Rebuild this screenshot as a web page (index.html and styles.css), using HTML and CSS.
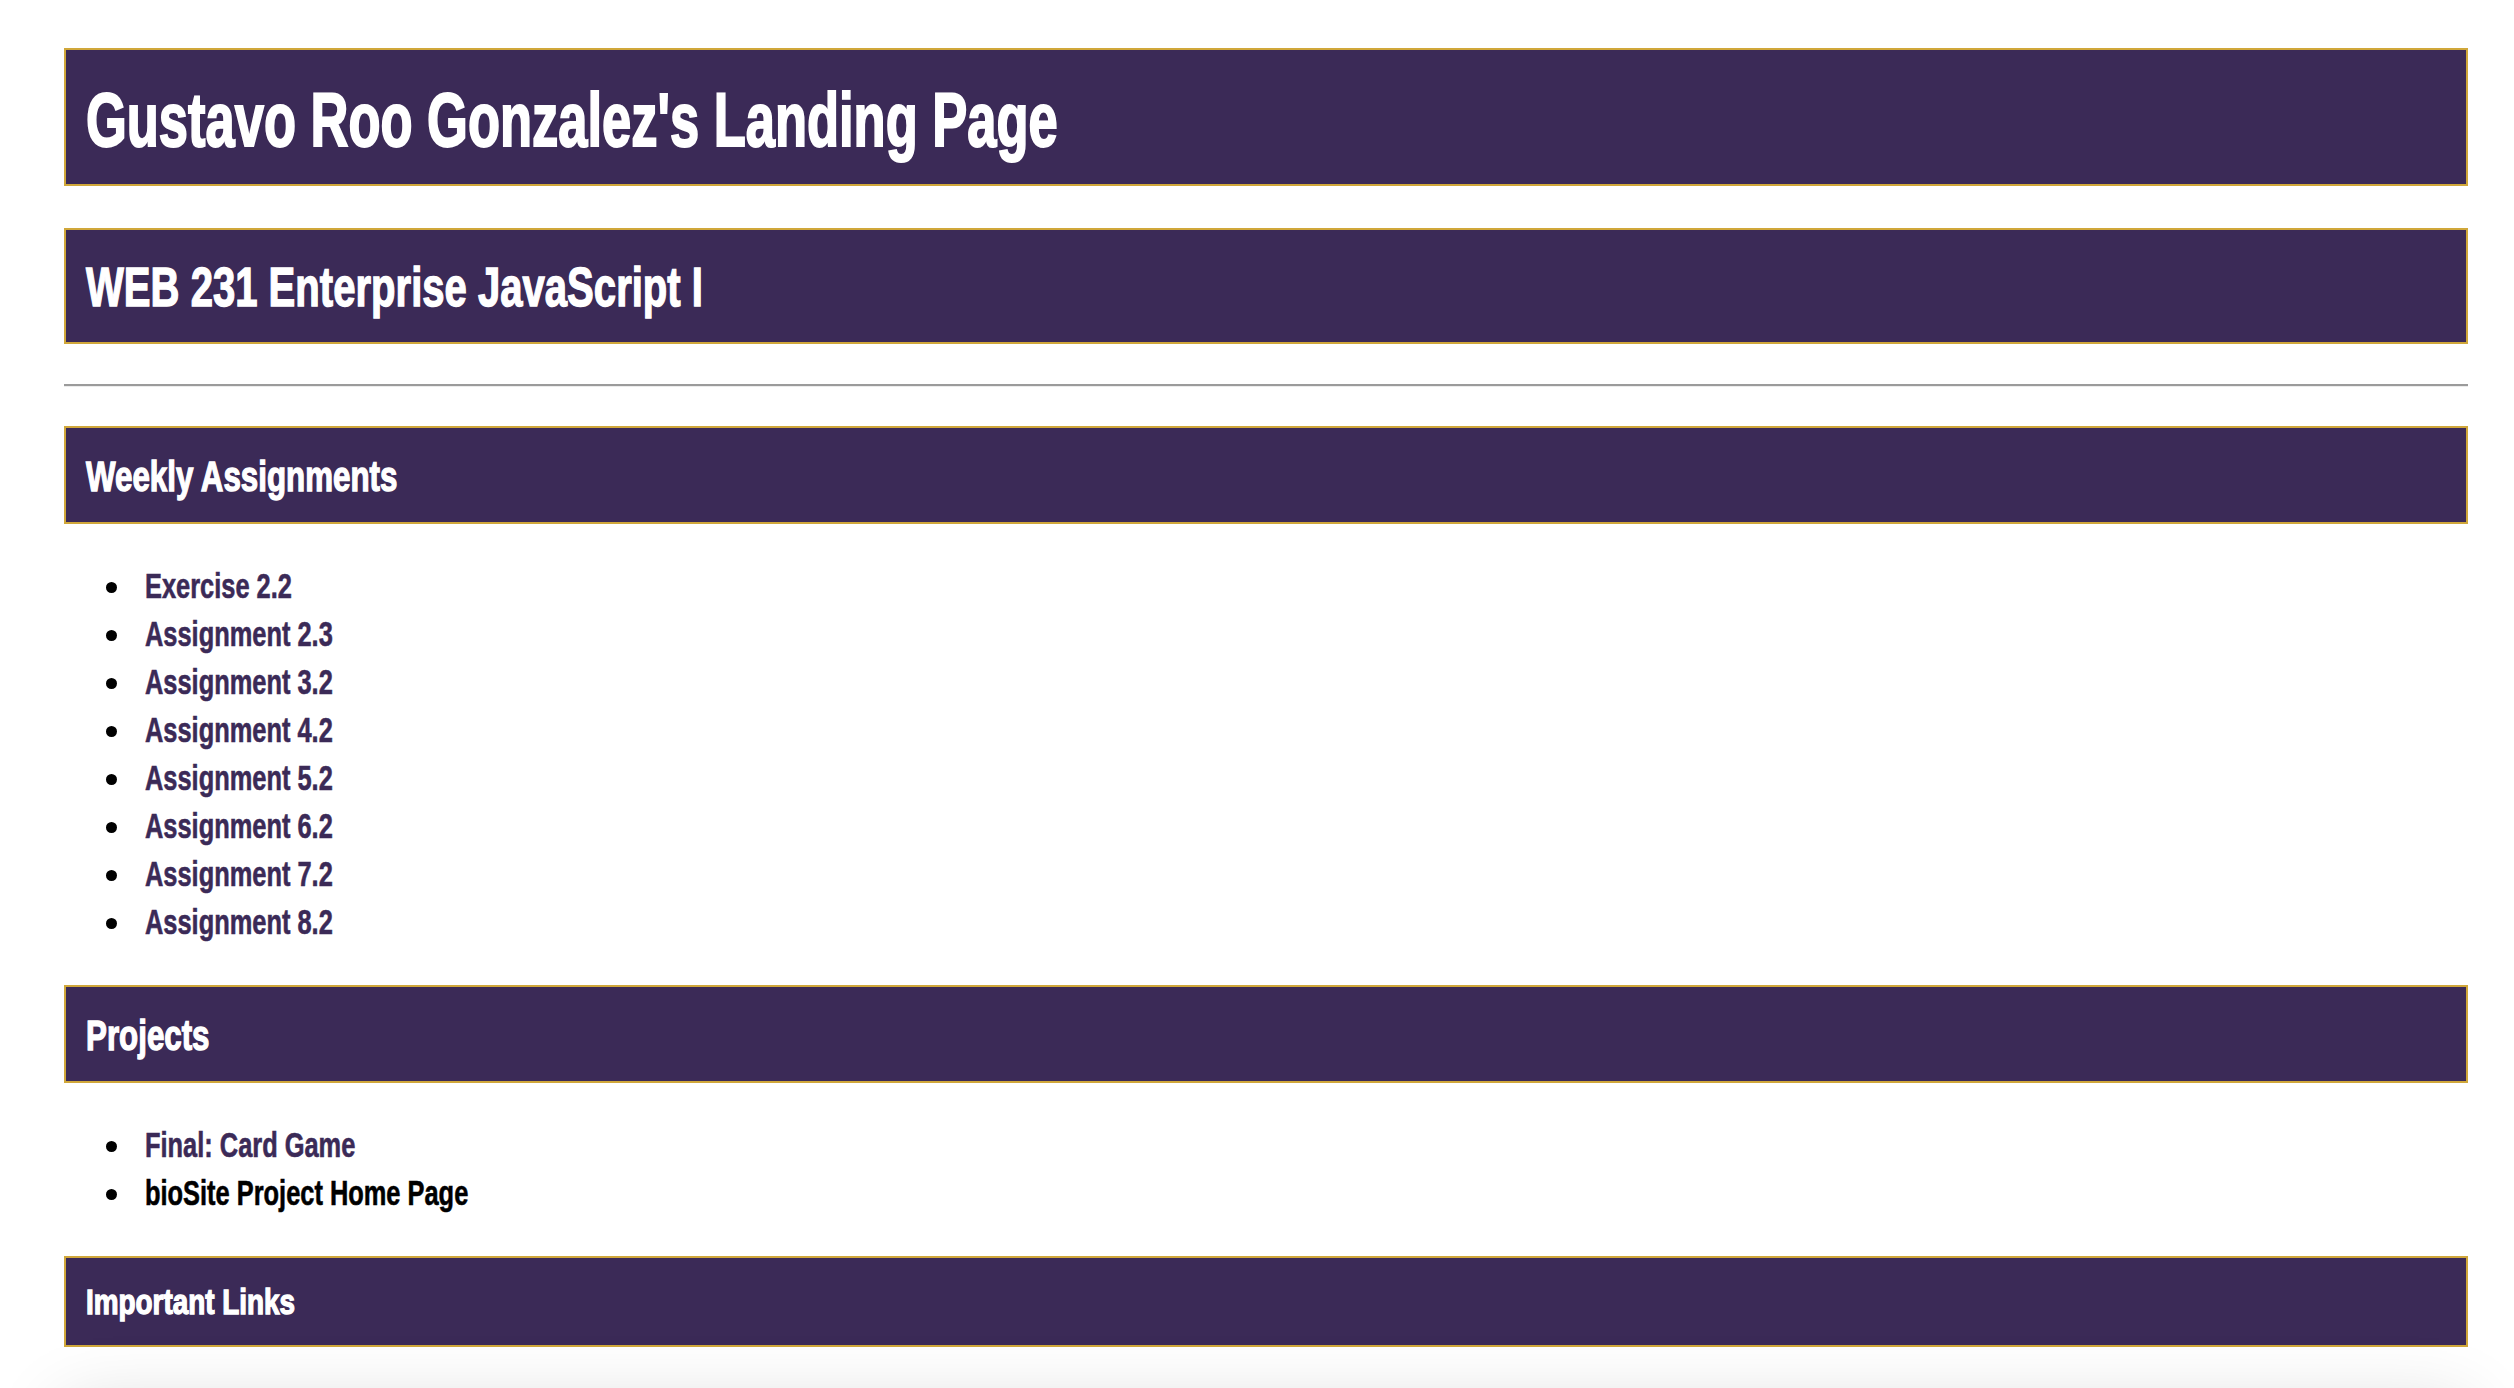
FILE: index.html
```html
<!DOCTYPE html>
<html lang="en">
<head>
<meta charset="utf-8">
<title>Gustavo Roo Gonzalez's Landing Page</title>
<link rel="stylesheet" href="styles.css">
</head>
<body>
<main class="page">
  <h1 class="banner banner-title"><span class="cond">Gustavo Roo Gonzalez's Landing Page</span></h1>
  <h2 class="banner banner-course"><span class="cond">WEB 231 Enterprise JavaScript I</span></h2>
  <hr class="divider">
  <h3 class="banner banner-section"><span class="cond">Weekly Assignments</span></h3>
  <ul class="link-list">
    <li><a href="#"><span class="cond">Exercise 2.2</span></a></li>
    <li><a href="#"><span class="cond">Assignment 2.3</span></a></li>
    <li><a href="#"><span class="cond">Assignment 3.2</span></a></li>
    <li><a href="#"><span class="cond">Assignment 4.2</span></a></li>
    <li><a href="#"><span class="cond">Assignment 5.2</span></a></li>
    <li><a href="#"><span class="cond">Assignment 6.2</span></a></li>
    <li><a href="#"><span class="cond">Assignment 7.2</span></a></li>
    <li><a href="#"><span class="cond">Assignment 8.2</span></a></li>
  </ul>
  <h3 class="banner banner-section"><span class="cond">Projects</span></h3>
  <ul class="link-list">
    <li><a href="#"><span class="cond">Final: Card Game</span></a></li>
    <li><span class="cond">bioSite Project Home Page</span></li>
  </ul>
  <h4 class="banner banner-small"><span class="cond">Important Links</span></h4>
  <div class="card"></div>
</main>
</body>
</html>
```

FILE: styles.css
```css
html {
  overflow: hidden;
}

body {
  margin: 0;
  background: #ffffff;
  font-family: "Liberation Sans", Arial, sans-serif;
  font-weight: 700;
  color: #000000;
}

.page {
  margin: 48px 46px 0 64px;
}

.cond {
  display: inline-block;
  transform-origin: left center;
  transform: scaleX(0.71);
  white-space: nowrap;
}

.banner {
  margin: 0;
  background: #3b2a57;
  border: 2px solid #d0a73a;
  color: #ffffff;
  font-weight: 700;
  padding-left: 20px;
  padding-right: 20px;
  white-space: nowrap;
  overflow: hidden;
  -webkit-text-stroke: 1.4px #ffffff;
}

.banner-title {
  font-size: 75.4px;
  line-height: 128px;
  padding-top: 6px;
  -webkit-text-stroke-width: 2px;
}

.banner-title .cond {
  transform: scaleX(0.696);
}

.banner-course {
  margin-top: 42px;
  font-size: 55.9px;
  line-height: 110px;
  padding-top: 2px;
}

.banner-course .cond {
  transform: scaleX(0.717);
}

.banner-section {
  font-size: 43.3px;
  line-height: 91px;
  padding-top: 3px;
}

.banner-section .cond {
  transform: scaleX(0.723);
}

.banner-small {
  font-size: 35.5px;
  line-height: 86px;
  padding-top: 1px;
}

.banner-small .cond {
  transform: scaleX(0.785);
}

.divider {
  margin: 40px 0 39px;
  height: 0;
  border: none;
  border-top: 2px solid #9b9b9b;
  border-bottom: 1px solid #ececec;
}

.link-list {
  margin: 38px 0 39px;
  padding: 0;
  list-style: none;
  font-size: 35.6px;
  line-height: 48px;
  -webkit-text-stroke: 0.6px currentColor;
}

.link-list li {
  display: flex;
  align-items: center;
}

.link-list li::before {
  content: "";
  width: 11px;
  height: 11px;
  margin: 3px 28px 0 42px;
  border-radius: 50%;
  background: #000000;
  flex: none;
}

.link-list .cond {
  transform: scaleX(0.714);
}

.link-list a {
  color: #3b2a57;
  text-decoration: none;
}

.card {
  margin-top: 60px;
  height: 300px;
  background: #ffffff;
  box-shadow: 0 0 70px rgba(0, 0, 0, 0.16);
}
```
